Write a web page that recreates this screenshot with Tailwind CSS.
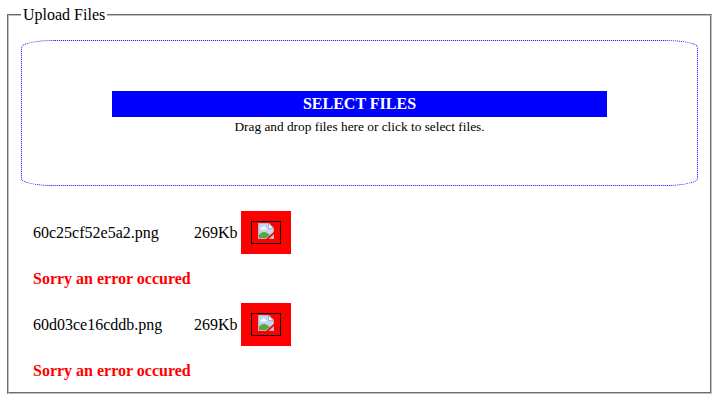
<!DOCTYPE html>
<html lang="en"><head><meta charset="utf-8"><title>Upload Files</title>
<script src="https://cdn.jsdelivr.net/npm/@tailwindcss/browser@4"></script></head>
<body class="bg-white text-black text-[16px] leading-[18px] font-['Liberation_Serif',serif] overflow-hidden">
<svg class="hidden"><symbol id="broken" viewBox="0 0 16 16">
<path d="M0 0h11l5 5v3.500L8 16H0z" fill="#b5b8c0"/>
<path d="M1 1h9.500L15 5.500V9.500L8 15H1z" fill="#c3d5f5"/>
<path d="M2.500 6.500c0-2 1-2 1.800-2C5 2.500 7 3 7.300 4.800c1.200 0 1.500.8 1.200 1.700z" fill="#fff"/>
<path d="M1 15v-3c2-3.500 6-4 9-1.500L11.800 12 8 15z" fill="#55a83b"/>
<path d="M10.500 1v4.500H15z" fill="#fff"/><path d="M10.500 0v5.500H16" fill="none" stroke="#a5a5a5" stroke-width=".8"/>
<path d="M16 11V16h-5.500z" fill="#b5b8c0"/><path d="M15 12.500V15h-2.500z" fill="#c3d5d5"/>
</symbol></svg>
<fieldset class="mx-[7px] mt-[6px] w-[703px] h-[388px] border-2 [border-style:groove] border-[#c0c0c0] px-[12px]">
<legend class="px-[2px]">Upload Files</legend>
<div class="mt-[16px] w-[677px] h-[146px] border border-dotted border-[#0000ff] rounded-[5%] px-[90px] pt-[50px] text-center">
<div class="h-[26px] leading-[26px] bg-[#0000ff] text-white font-bold">SELECT FILES</div>
<div class="text-[13.333px] leading-[20px]">Drag and drop files here or click to select files.</div>
</div>
<div class="pl-[12px] pt-[25px]">
<div class="flex items-center h-[43px]"><span class="w-[161px] pt-px">60c25cf52e5a2.png</span><span class="w-[47px] pt-px">269Kb</span>
<span class="w-[50px] h-[43px] bg-[#ff0000] p-[10px]"><span class="block w-[30px] h-[23px] border border-black pl-[6px] pt-[1px]"><svg width="16" height="16"><use href="#broken"/></svg></span></span></div>
<div class="h-[49px] pt-[16px] font-bold text-[#ff0000]">Sorry an error occured</div>
<div class="flex items-center h-[43px]"><span class="w-[161px] pt-px">60d03ce16cddb.png</span><span class="w-[47px] pt-px">269Kb</span>
<span class="w-[50px] h-[43px] bg-[#ff0000] p-[10px]"><span class="block w-[30px] h-[23px] border border-black pl-[6px] pt-[1px]"><svg width="16" height="16"><use href="#broken"/></svg></span></span></div>
<div class="pt-[16px] font-bold text-[#ff0000]">Sorry an error occured</div>
</div>
</fieldset></body></html>
